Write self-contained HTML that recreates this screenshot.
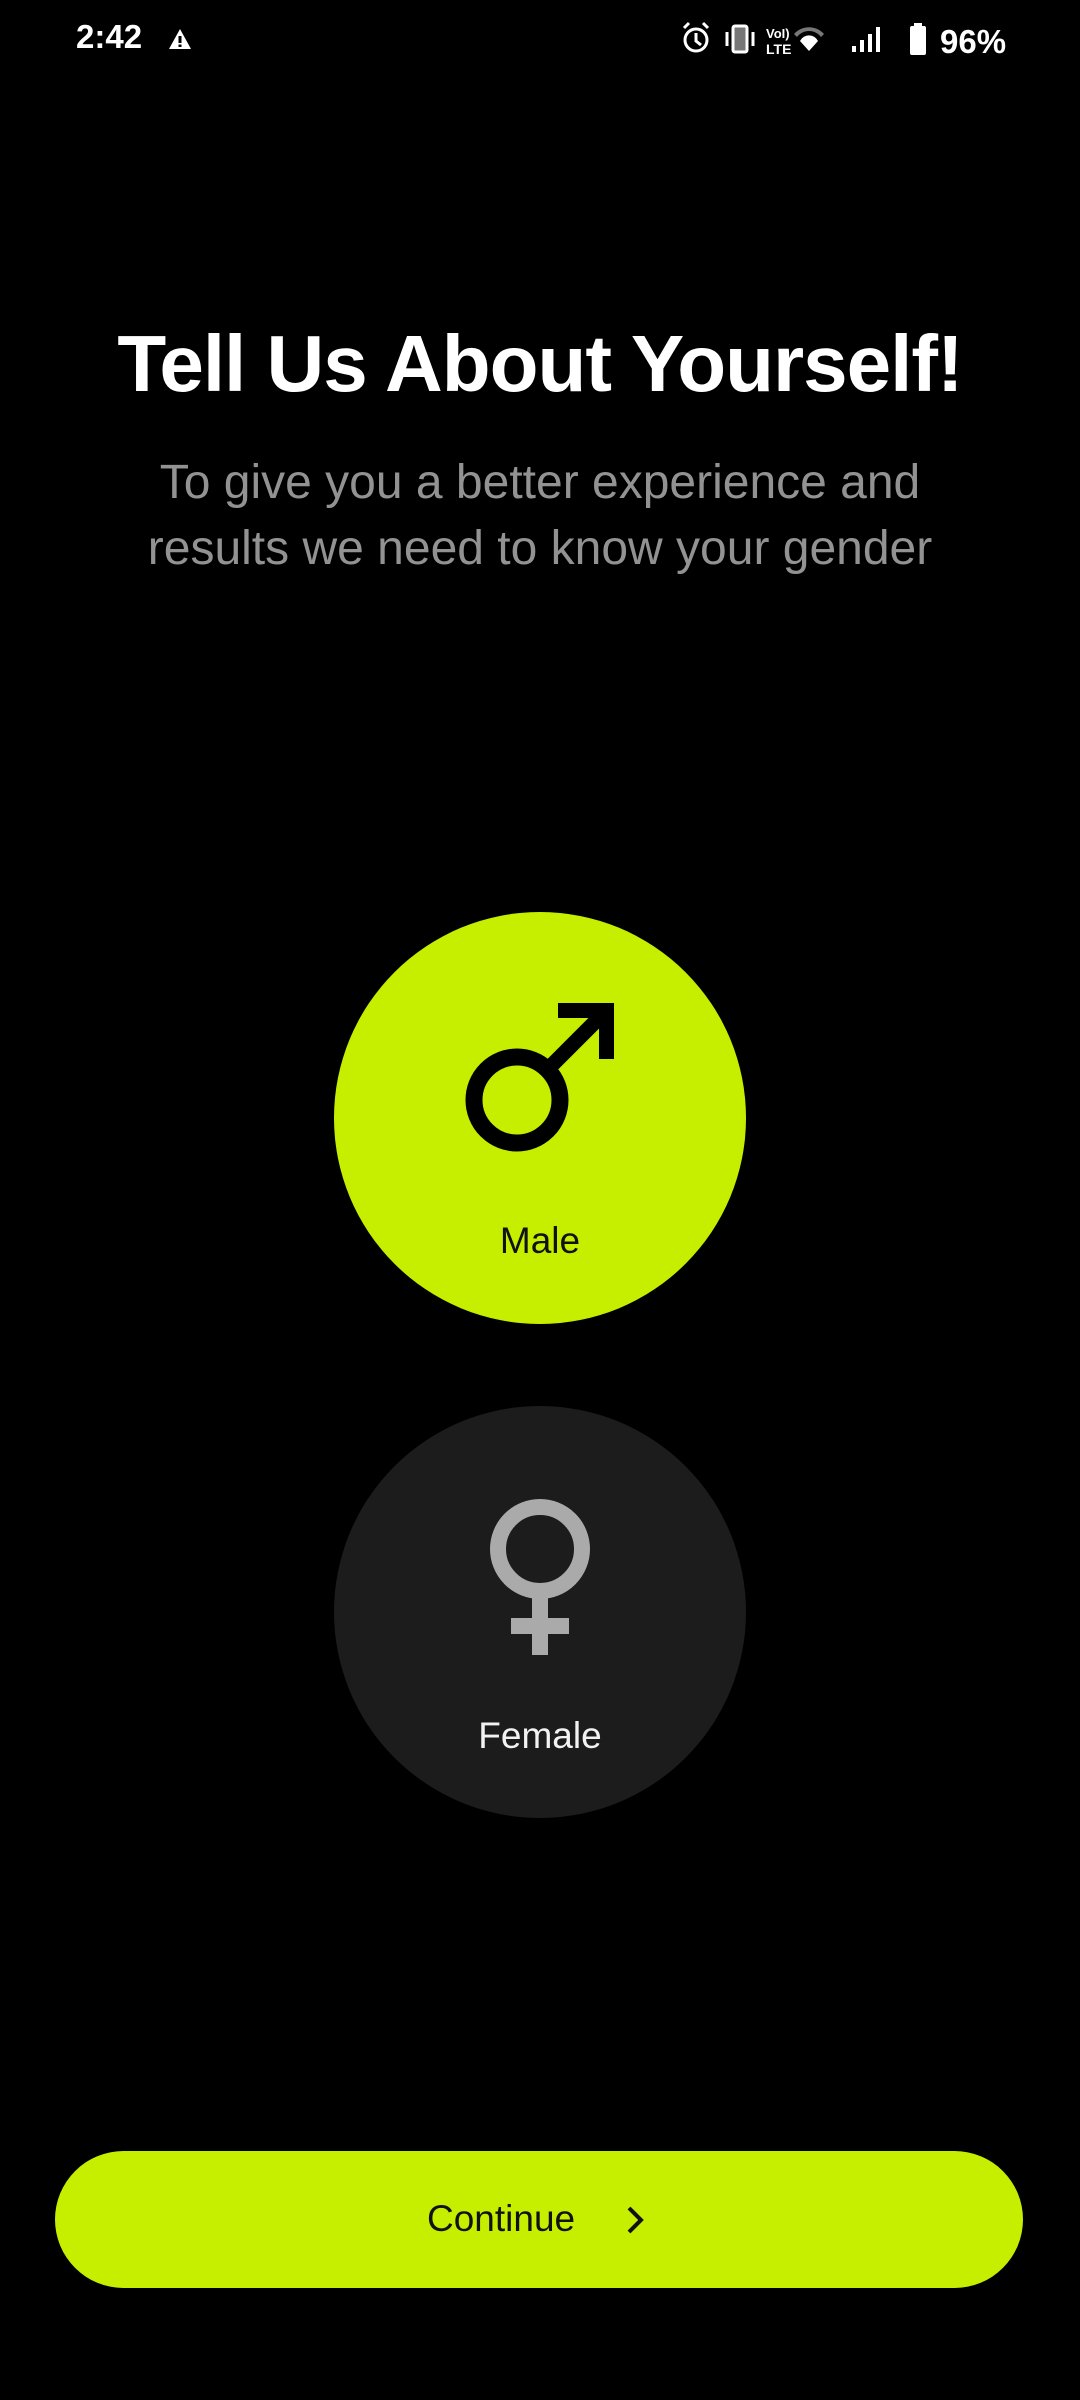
<!DOCTYPE html>
<html><head><meta charset="utf-8"><style>
html,body{margin:0;padding:0;background:#000;}
body{width:1080px;height:2400px;position:relative;overflow:hidden;font-family:"Liberation Sans",sans-serif;color:#fff;}
.abs{position:absolute;}
.title{left:0;width:1080px;top:318px;text-align:center;font-size:80px;font-weight:bold;letter-spacing:-1px;}
.sub{left:0;width:1080px;top:450px;text-align:center;font-size:48px;line-height:66px;color:#929292;}
.circle{left:334px;width:412px;height:412px;border-radius:50%;}
.lbl{left:0;width:412px;text-align:center;font-size:37px;}
.btn{left:55px;top:2151px;width:968px;height:137px;border-radius:69px;background:#c6ef00;}
</style></head><body>
<div class="abs" style="left:76px;top:18px;font-size:33px;font-weight:bold;">2:42</div>
<svg class="abs" style="left:168px;top:28px" width="24" height="22" viewBox="0 0 24 22"><path d="M12 1 L23 21 H1 Z" fill="#fff"/><rect x="10.5" y="8" width="3" height="7" fill="#000"/><rect x="10.5" y="16.5" width="3" height="2.5" fill="#000"/></svg>
<svg class="abs" style="left:680px;top:20px" width="340" height="40" viewBox="0 0 340 40">
<circle cx="16" cy="20" r="11" fill="none" stroke="#fff" stroke-width="3"/><path d="M16 13v8l5 4" stroke="#fff" stroke-width="3" fill="none"/><path d="M4 8l5-5M28 8l-5-5" stroke="#fff" stroke-width="3"/>
<rect x="53" y="6" width="14" height="26" rx="2" fill="#777" stroke="#fff" stroke-width="3"/><path d="M47 12v14M73 12v14" stroke="#fff" stroke-width="3"/>
<text x="86" y="18" font-size="13" font-weight="bold" fill="#fff" font-family="Liberation Sans">VoI)</text><text x="86" y="34" font-size="14" font-weight="bold" fill="#fff" font-family="Liberation Sans">LTE</text>
<path d="M114 14 a20 20 0 0 1 30 0 l-3 3 a15 15 0 0 0 -24 0z" fill="#777"/><path d="M120 21 a10 10 0 0 1 18 0 l-9 10z" fill="#fff"/>
<path d="M172 32h4v-6h-4zM180 32h4v-12h-4zM188 32h4v-18h-4zM196 32h4v-25h-4z" fill="#fff"/>
<rect x="230" y="6" width="16" height="29" rx="2" fill="#fff"/><rect x="234" y="3" width="8" height="4" fill="#fff"/>
<text x="260" y="33" font-size="33" font-weight="bold" fill="#fff" font-family="Liberation Sans">96%</text>
</svg>
<div class="abs title">Tell Us About Yourself!</div>
<div class="abs sub">To give you a better experience and<br>results we need to know your gender</div>
<div class="abs circle" style="top:912px;background:#c6ef00;">
<svg class="abs" style="left:0;top:0" width="412" height="412" viewBox="334 912 412 412">
<circle cx="517" cy="1100" r="43" fill="none" stroke="#000" stroke-width="17"/>
<path d="M547 1070 L600 1017" stroke="#000" stroke-width="15"/>
<path d="M558 1003 H614 V1059 H599 V1018 H558 Z" fill="#000"/>
</svg>
<div class="abs lbl" style="top:1220px;margin-top:-912px;color:#111;">Male</div>
</div>
<div class="abs circle" style="top:1406px;background:#1c1c1c;">
<svg class="abs" style="left:0;top:0" width="412" height="412" viewBox="334 1406 412 412">
<circle cx="540" cy="1549" r="42" fill="none" stroke="#aaa" stroke-width="16"/>
<rect x="532" y="1590" width="16" height="65" fill="#aaa"/>
<rect x="511" y="1618" width="58" height="16" fill="#aaa"/>
</svg>
<div class="abs lbl" style="top:1715px;margin-top:-1406px;color:#f2f2f2;">Female</div>
</div>
<div class="abs btn">
<div class="abs" style="left:372px;top:47px;font-size:37px;color:#111;">Continue</div>
<svg class="abs" style="left:568px;top:53px" width="24" height="32" viewBox="0 0 24 32"><path d="M6 4 L18 16 L6 28" fill="none" stroke="#111" stroke-width="4"/></svg>
</div>
</body></html>
